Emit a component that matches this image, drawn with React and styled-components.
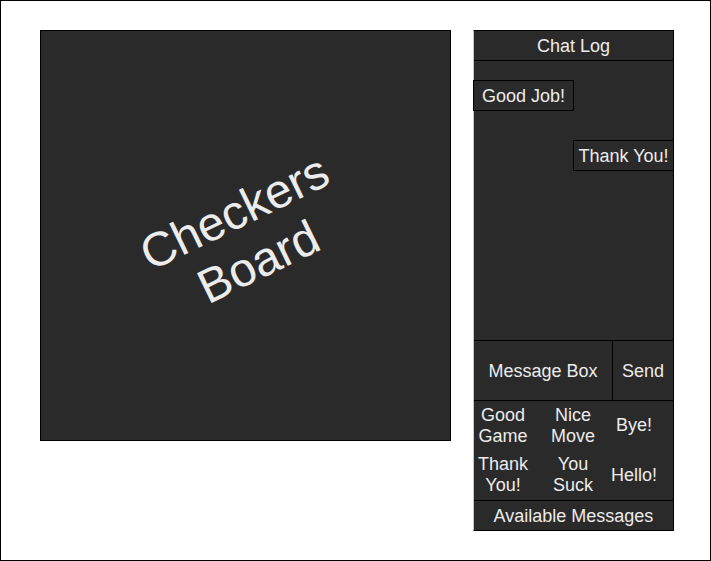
import React from "react"
import styled, { createGlobalStyle } from "styled-components"

const GlobalStyle = createGlobalStyle`
  html, body {
    margin: 0;
    padding: 0;
    background: #fff;
  }
  * { box-sizing: border-box; }
`

const Frame = styled.div`
  width: 711px;
  height: 561px;
  border: 1px solid #000;
  padding: 29px 0 0 39px;
  display: flex;
  align-items: flex-start;
  gap: 22px;
  font-family: "Liberation Sans", Arial, sans-serif;
  color: #ececec;
`

const Board = styled.div`
  width: 411px;
  height: 411px;
  border: 1px solid #000;
  background: #2a2a2a;
  display: flex;
  align-items: center;
  justify-content: center;
  overflow: hidden;
`

const BoardLabel = styled.div`
  font-size: 48px;
  line-height: 55px;
  text-align: center;
  transform: translate(1px, 1px) rotate(-26deg);
`

const Chat = styled.div`
  width: 201px;
  height: 501px;
  border: 1px solid #000;
  border-left-color: #c8c8c8;
  background: #2a2a2a;
  display: flex;
  flex-direction: column;
  font-size: 18px;
`

const Header = styled.div`
  flex: none;
  height: 30px;
  padding-top: 2px;
  border-bottom: 1px solid #000;
  display: flex;
  align-items: center;
  justify-content: center;
`

const Log = styled.div`
  flex: 1;
  min-height: 0;
  display: flex;
  flex-direction: column;
  padding-top: 19px;
  gap: 29px;
`

const Bubble = styled.div`
  width: 101px;
  height: 31px;
  padding-top: 2px;
  border: 1px solid #000;
  display: flex;
  align-items: center;
  justify-content: center;
  align-self: ${p => (p.$mine ? "flex-end" : "flex-start")};
  margin: ${p => (p.$mine ? "0 -1px 0 0" : "0 0 0 -1px")};
`

const InputRow = styled.div`
  flex: none;
  height: 61px;
  padding-top: 2px;
  border-top: 1px solid #000;
  border-bottom: 1px solid #000;
  display: flex;
`

const MessageBox = styled.div`
  width: 139px;
  margin-top: -2px;
  padding-top: 2px;
  border-right: 1px solid #000;
  display: flex;
  align-items: center;
  justify-content: center;
`

const SendButton = styled.div`
  flex: 1;
  display: flex;
  align-items: center;
  justify-content: center;
`

const Presets = styled.div`
  flex: none;
  height: 99px;
  display: grid;
  grid-template-columns: 58px 82px 40px;
  grid-template-rows: 1fr 1fr;
`

const Preset = styled.div`
  display: flex;
  align-items: center;
  justify-content: center;
  text-align: center;
  line-height: 21px;
  white-space: nowrap;
`

const Footer = styled.div`
  flex: none;
  height: 30px;
  padding-top: 1px;
  border-top: 1px solid #000;
  display: flex;
  align-items: center;
  justify-content: center;
`

const presets = [
  ["Good", "Game"],
  ["Nice", "Move"],
  ["Bye!"],
  ["Thank", "You!"],
  ["You", "Suck"],
  ["Hello!"],
]

export default function App() {
  return (
    <>
      <GlobalStyle />
      <Frame>
        <Board>
          <BoardLabel>
            Checkers
            <br />
            Board
          </BoardLabel>
        </Board>
        <Chat>
          <Header>Chat Log</Header>
          <Log>
            <Bubble>Good Job!</Bubble>
            <Bubble $mine>Thank You!</Bubble>
          </Log>
          <InputRow>
            <MessageBox>Message Box</MessageBox>
            <SendButton>Send</SendButton>
          </InputRow>
          <Presets>
            {presets.map((lines, i) => (
              <Preset key={i}>
                <div>
                  {lines.map((l, j) => (
                    <div key={j}>{l}</div>
                  ))}
                </div>
              </Preset>
            ))}
          </Presets>
          <Footer>Available Messages</Footer>
        </Chat>
      </Frame>
    </>
  )
}
